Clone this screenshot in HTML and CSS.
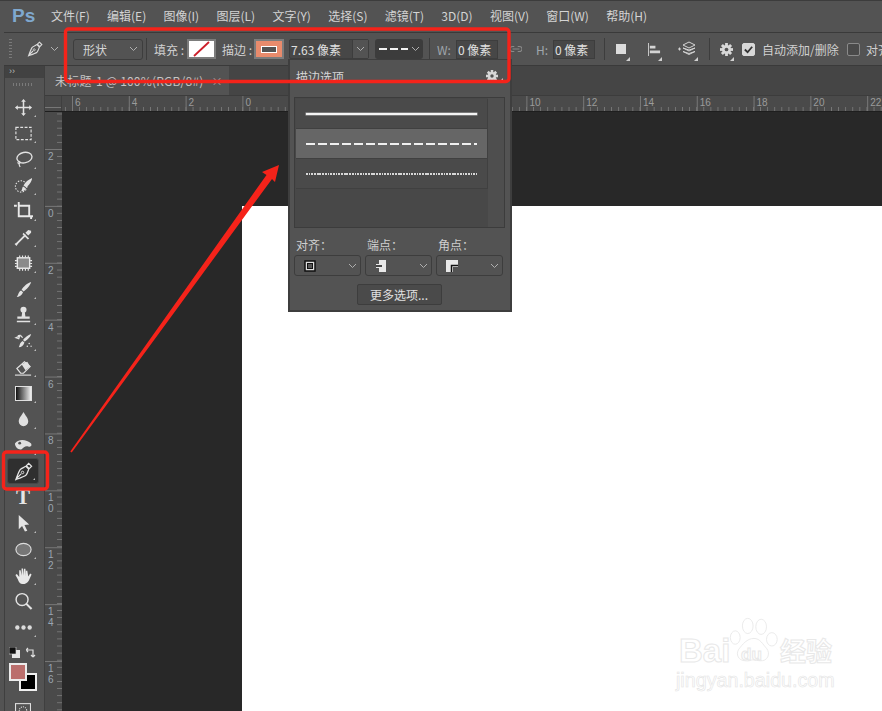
FILE: index.html
```html
<!DOCTYPE html>
<html lang="zh">
<head>
<meta charset="utf-8">
<title>Photoshop</title>
<link rel="stylesheet" href="styles.css">
</head>
<body>
<div class="app">
  <header class="menubar">
    <span class="logo">Ps</span>
    <nav class="menu">
      <span>文件(F)</span><span>编辑(E)</span><span>图像(I)</span><span>图层(L)</span><span>文字(Y)</span><span>选择(S)</span><span>滤镜(T)</span><span>3D(D)</span><span>视图(V)</span><span>窗口(W)</span><span>帮助(H)</span>
    </nav>
  </header>
  <section class="options">
    <span class="grip"></span>
    <svg class="pen-opt" viewBox="0 0 20 20"><path d="M15.500 1.500l3 3-2.500 2.500-3-3zM12.500 4.500l3 3c-1 3-1.500 5-3 6.500-2 1.500-5 2.500-10.500 4.500 2-5.500 3-8.500 4.500-10.500 1.500-1.500 3.500-2 6-3.500zM2 18l5.500-5.500" fill="none" stroke="#dcdcdc" stroke-width="1.400"/><circle cx="9" cy="11" r="1.300" fill="none" stroke="#dcdcdc"/></svg>
    <svg class="chev c1" viewBox="0 0 9 6"><path d="M1 1l3.500 3.500L8 1" fill="none" stroke="#b0b0b0"/></svg>
    <span class="vsep s1"></span>
    <div class="select shape-sel"><span>形状</span><svg class="chev" viewBox="0 0 9 6"><path d="M1 1l3.500 3.500L8 1" fill="none" stroke="#b0b0b0"/></svg></div>
    <span class="vsep s2"></span>
    <span class="lbl fill-lbl">填充 :</span>
    <span class="swatch"><svg viewBox="0 0 25 16"><rect width="25" height="16" fill="#fff"/><path d="M5 15L20 1" stroke="#cc1f2a" stroke-width="1.800"/></svg></span>
    <span class="lbl stroke-lbl">描边 :</span>
    <span class="swatch stroke-sw"><span class="stroke-in"></span></span>
    <div class="value-sel"><span class="val">7.63 像素</span><span class="arrow"><svg class="chev" viewBox="0 0 9 6"><path d="M1 1l3.500 3.500L8 1" fill="none" stroke="#b0b0b0"/></svg></span></div>
    <div class="dash-sel"><span class="dash"></span><svg class="chev" viewBox="0 0 9 6"><path d="M1 1l3.500 3.500L8 1" fill="none" stroke="#b0b0b0"/></svg></div>
    <span class="vsep s3"></span>
    <span class="lbl wh w-lbl">W:</span>
    <span class="field">0 像素</span>
    <svg class="link" viewBox="0 0 14 8"><path d="M5 1H3a3 3 0 0 0 0 6h2M9 1h2a3 3 0 0 1 0 6H9M3 4h8" fill="none" stroke="#8a8a8a" stroke-width="1.200"/></svg>
    <span class="lbl wh h-lbl">H:</span>
    <span class="field">0 像素</span>
    <span class="vsep s4"></span>
    <span class="tool-btn b1 corner"><span class="square"></span></span>
    <span class="tool-btn b2 corner"><svg viewBox="0 0 14 14"><path d="M0.500 0v14" stroke="#d4d4d4"/><path d="M2 3h6v3H2zM2 8h11v3H2z" fill="#d4d4d4"/></svg></span>
    <span class="tool-btn b3 corner"><svg viewBox="0 0 18 16"><path d="M0 8h3M1.500 6.500v3" stroke="#d4d4d4"/><path d="M11 1l6 3-6 3-6-3zM5 7l6 3 6-3-6 2zM5 10.500l6 3 6-3-6 2z" fill="none" stroke="#d4d4d4"/></svg></span>
    <span class="vsep s5"></span>
    <span class="tool-btn b4 corner"><svg viewBox="0 0 14 14"><g fill="#d8d8d8"><circle cx="7" cy="7" r="4.800"/><rect x="5.500" y="0" width="3" height="14"/><rect x="0" y="5.500" width="14" height="3"/><rect x="5.500" y="0" width="3" height="14" transform="rotate(45 7 7)"/><rect x="5.500" y="0" width="3" height="14" transform="rotate(-45 7 7)"/></g><circle cx="7" cy="7" r="2" fill="#535353"/></svg></span>
    <span class="check on"><svg viewBox="0 0 12 12"><path d="M2 6l3 3 5-6" fill="none" stroke="#333" stroke-width="2"/></svg></span>
    <span class="lbl auto">自动添加/删除</span>
    <span class="check off"></span>
    <span class="lbl align-lbl">对齐边缘</span>
  </section>
  <div class="main">
    <aside class="toolbox">
      <div class="collapse"><span>››</span></div>
      <span class="tgrip"></span>
      <div class="tools">
        <span class="tool corner"><svg viewBox="0 0 20 20"><path d="M10 1l2.500 3h-1.700v5.200H16V7.500l3 2.500-3 2.500v-1.700h-5.200V16h1.700L10 19l-2.500-3h1.700v-5.200H4v1.700L1 10l3-2.500v1.700h5.200V4H7.500z" fill="#e2e2e2"/></svg></span>
        <span class="tool corner"><svg viewBox="0 0 20 20"><rect x="2" y="3.500" width="16" height="13" fill="none" stroke="#e2e2e2" stroke-width="1.200" stroke-dasharray="3 1.600"/></svg></span>
        <span class="tool corner"><svg viewBox="0 0 20 20"><ellipse cx="11" cy="8" rx="8" ry="5.500" fill="none" stroke="#e2e2e2" stroke-width="1.400" transform="rotate(-12 11 8)"/><path d="M5 12c-2 2 0 3 1 2s0-2-1-2zM5.500 15c0 1.500.5 2 1 3" fill="none" stroke="#e2e2e2" stroke-width="1.200"/></svg></span>
        <span class="tool corner"><svg viewBox="0 0 20 20"><circle cx="7.500" cy="11" r="6" fill="none" stroke="#e2e2e2" stroke-width="1.200" stroke-dasharray="1.500 1.500"/><path d="M19 2c0 4-4 8-6 10l-3-2c2-4 5-6 9-8zM9.500 11l3 2c-1 3-3 3-5 3 1-1 1-4 2-5z" fill="#e2e2e2"/></svg></span>
        <span class="tool corner"><svg viewBox="0 0 20 20"><path d="M0 4h3M5 0v15h15M5 4h11v11M18 15v3" fill="none" stroke="#e8e8e8" stroke-width="2"/></svg></span>
        <span class="tool corner"><svg viewBox="0 0 20 20"><path d="M12 8l-8 8-1.500 2-1-1 2-1.500 8-8z" fill="none" stroke="#e2e2e2" stroke-width="1.200"/><path d="M10 5l6 6-1.500 1L9 6.500zM12 5l3-3 3 1 0 2-3 3z" fill="#e2e2e2"/></svg></span>
        <span class="tool corner"><svg viewBox="0 0 20 20"><rect x="3.500" y="4" width="13" height="11" fill="#8a8a8a" stroke="#e8e8e8" stroke-width="1.500"/><path d="M6 1.500v2M9 1.500v2M12 1.500v2M15 1.500v2M6 15.500v2M9 15.500v2M12 15.500v2M15 15.500v2M1 7h2M1 10h2M1 13h2M17 7h2M17 10h2M17 13h2" stroke="#e8e8e8" stroke-width="1.200"/></svg></span>
        <span class="tool corner"><svg viewBox="0 0 20 20"><path d="M18 2c-1 4-5 8-8 10l-2-2c2-3 6-7 10-8zM7.500 11l2 2c-1 3-4 5-7 5 2-1 2-6 5-7z" fill="#e2e2e2"/></svg></span>
        <span class="tool corner"><svg viewBox="0 0 20 20"><circle cx="10" cy="4" r="3.200" fill="#e2e2e2"/><path d="M8.700 6h2.600l.7 5h4.500v2.500H3.500V11H8zM3 15.500h14V17H3z" fill="#e2e2e2"/></svg></span>
        <span class="tool corner"><svg viewBox="0 0 20 20"><path d="M18 2c-1 4-5 7-7 8l-1.500-1.500C11 6 15 3 18 2zM9 9.500L11 11c-1 3-3 5-6 5 1-1 1-5 4-6.500z" fill="#e2e2e2"/><path d="M2 6l4-2-1 3zM4 4c2-1 4 0 5 2" fill="none" stroke="#e2e2e2" stroke-width="1.300"/><circle cx="16" cy="12" r=".8" fill="#e2e2e2"/><circle cx="14" cy="15" r=".8" fill="#e2e2e2"/><circle cx="18" cy="15" r=".7" fill="#e2e2e2"/></svg></span>
        <span class="tool corner"><svg viewBox="0 0 20 20"><path d="M3 11l8-7 6 5-7 7H7z" fill="none" stroke="#e2e2e2" stroke-width="1.200"/><path d="M8 6.500l6-2.500 3 5-5 4z" fill="#e2e2e2"/><path d="M1 18h17" stroke="#e2e2e2" stroke-width="1.200"/></svg></span>
        <span class="tool corner"><span class="gradient"></span></span>
        <span class="tool corner"><svg viewBox="0 0 20 20"><path d="M10 2c2 4 5 6 5 10a5 5 0 0 1-10 0c0-4 3-6 5-10z" fill="#e0e0e0"/></svg></span>
        <span class="tool corner"><svg viewBox="0 0 20 20"><path d="M1 8c3-5 12-5 17 0 1 2 0 4-3 3-3-1-5 1-7 3-3 1-7-2-7-6z" fill="#e0e0e0"/><circle cx="6" cy="7.500" r="1.500" fill="#535353"/></svg></span>
        <span class="tool current corner"><svg viewBox="0 0 20 20"><path d="M15.500 1.500l3 3-2.500 2.500-3-3zM12.500 4.500l3 3c-1 3-1.500 5-3 6.500-2 1.500-5 2.500-10.500 4.500 2-5.500 3-8.500 4.500-10.500 1.500-1.500 3.500-2 6-3.500zM2 18l5.500-5.500" fill="none" stroke="#e6e6e6" stroke-width="1.300"/><circle cx="9" cy="11" r="1.300" fill="none" stroke="#e6e6e6"/></svg></span>
        <span class="tool"><span class="type">T</span></span>
        <span class="tool corner"><svg viewBox="0 0 20 20"><path d="M5 1l11 10-5 .5 3 6-2.500 1-3-6L5 16z" fill="#e4e4e4"/></svg></span>
        <span class="tool corner"><svg viewBox="0 0 20 20"><ellipse cx="10" cy="10" rx="8" ry="6.500" fill="#767676" stroke="#dcdcdc" stroke-width="1.200"/></svg></span>
        <span class="tool corner"><svg viewBox="0 0 20 20"><path d="M4 14L1.500 9.500l1.500-1 2.500 3V4.500h1.500L8 10V2.500h1.500L10.500 10V3h1.500l.5 7.500V5h1.500L15 11l2-3 1.500 1-3 6.500C14 18 12 19 9 19c-2.500 0-4-2-5-5z" fill="#e8e8e8"/></svg></span>
        <span class="tool"><svg viewBox="0 0 20 20"><circle cx="8.500" cy="8" r="6.300" fill="none" stroke="#e4e4e4" stroke-width="1.500"/><path d="M13 12.500l5.500 5.500" stroke="#e4e4e4" stroke-width="2.200"/></svg></span>
        <span class="tool corner"><svg viewBox="0 0 20 20"><circle cx="3.500" cy="10" r="2.300" fill="#dcdcdc"/><circle cx="10" cy="10" r="2.300" fill="#dcdcdc"/><circle cx="16.500" cy="10" r="2.300" fill="#dcdcdc"/></svg></span>
      </div>
      <div class="mini-row">
        <svg viewBox="0 0 11 11"><rect x="3" y="3" width="8" height="8" fill="#e6e6e6"/><rect x="0" y="0" width="7" height="7" fill="#111" stroke="#ddd" stroke-width=".6"/></svg>
        <svg viewBox="0 0 11 11"><path d="M1 3h6v7M0 3l2-2M0 3l2 2M7 10L5 8M7 10l2-2" fill="none" stroke="#e0e0e0" stroke-width="1.200"/></svg>
      </div>
      <div class="colors"><span class="bg-color"></span><span class="fg-color"></span></div>
      <div class="quick"><svg viewBox="0 0 15 12"><rect x=".5" y=".5" width="14" height="11" fill="none" stroke="#e0e0e0"/><circle cx="7.500" cy="7" r="3.500" fill="none" stroke="#e0e0e0" stroke-dasharray="1 1"/></svg></div>
    </aside>
    <div class="work">
      <div class="tabs"><div class="tab"><span>未标题-1 @ 100%(RGB/8#)</span><span class="x">×</span></div></div>
      <div class="ruler-top">
        <span class="corner-box"></span>
        <div class="hticks"><span>6</span><span>4</span><span>2</span><span>0</span><span class="gap5"></span><span>10</span><span>12</span><span>14</span><span>16</span><span>18</span><span>20</span><span>22</span></div>
      </div>
      <div class="stage">
        <div class="ruler-left">
          <span>2</span><span>0</span><span>2</span><span>4</span><span>6</span><span>8</span><span>1<br>0</span><span>1<br>2</span><span>1<br>4</span><span>1<br>6</span>
        </div>
        <div class="canvas"><div class="doc"></div></div>
      </div>
    </div>
  </div>
</div>

<div class="panel">
  <div class="panel-head"><span>描边选项</span><span class="gear-wrap corner"><svg class="gear" viewBox="0 0 14 14"><g fill="#d8d8d8"><circle cx="7" cy="7" r="4.800"/><rect x="5.500" y="0" width="3" height="14"/><rect x="0" y="5.500" width="14" height="3"/><rect x="5.500" y="0" width="3" height="14" transform="rotate(45 7 7)"/><rect x="5.500" y="0" width="3" height="14" transform="rotate(-45 7 7)"/></g><circle cx="7" cy="7" r="2" fill="#535353"/></svg></span></div>
  <div class="list">
    <div class="list-main">
      <div class="row"><span class="line solid"></span></div>
      <div class="row active"><span class="line dashed"></span></div>
      <div class="row"><span class="line dotted"></span></div>
    </div>
    <div class="list-scroll"></div>
  </div>
  <div class="pickers">
    <div class="picker"><label>对齐：</label><div class="pick"><svg viewBox="0 0 14 14"><rect x="2" y="2" width="10" height="10" fill="#ddd" stroke="#111" stroke-width="1.500"/><rect x="4.500" y="4.500" width="5" height="5" fill="#555" stroke="#111"/></svg><svg class="chev" viewBox="0 0 9 6"><path d="M1 1l3.500 3.500L8 1" fill="none" stroke="#b0b0b0"/></svg></div></div>
    <div class="picker"><label>端点：</label><div class="pick"><svg viewBox="0 0 14 14"><path d="M5 1h7v12H5V9H2V5h3z" fill="#e8e8e8"/><path d="M2 7h6" stroke="#111" stroke-width="1.500"/></svg><svg class="chev" viewBox="0 0 9 6"><path d="M1 1l3.500 3.500L8 1" fill="none" stroke="#b0b0b0"/></svg></div></div>
    <div class="picker"><label>角点：</label><div class="pick"><svg viewBox="0 0 14 14"><path d="M1 1h12v7H8v5H1z" fill="#e8e8e8"/><path d="M13 6.500H6.500V13" fill="none" stroke="#111" stroke-width="1.500"/></svg><svg class="chev" viewBox="0 0 9 6"><path d="M1 1l3.500 3.500L8 1" fill="none" stroke="#b0b0b0"/></svg></div></div>
  </div>
  <div class="more-wrap"><button class="more">更多选项...</button></div>
</div>

<svg class="marks" viewBox="0 0 882 711">
  <rect x="65.500" y="29" width="443.500" height="52.500" rx="3" fill="none" stroke="#f5231a" stroke-width="3.400"/>
  <rect x="3.500" y="452" width="44" height="37" rx="3" fill="none" stroke="#f5231a" stroke-width="3.400"/>
  <path d="M70.300 451.500L266.500 175L262 172L279 165L275 182L272 179L71.700 452.500Z" fill="#f5231a"/>
</svg>

<div class="watermark">
  <svg viewBox="0 0 60 56"><g fill="#fff" stroke="#e8e8e8" stroke-width="1"><ellipse cx="9" cy="23" rx="5.500" ry="7.500"/><ellipse cx="23" cy="10" rx="6" ry="8.500"/><ellipse cx="38" cy="11" rx="6" ry="8.500"/><ellipse cx="50" cy="25" rx="6" ry="7.500"/><path d="M30 24c7 0 10 7 14 11 5 6 1 15-7 14-4 0-5-1-8-1s-5 2-9 1c-7 0-11-7-7-13 4-5 9-12 17-12z"/></g></svg>
  <span class="wm-bai">Bai</span><span class="wm-du">du</span><span class="wm-jy">经验</span>
  <span class="wm-url">jingyan.baidu.com</span>
</div>
</body>
</html>
```
FILE: styles.css
```css
* { box-sizing: border-box; }
html, body { margin: 0; padding: 0; }
body {
  width: 882px; height: 711px; overflow: hidden; position: relative;
  background: #535353; color: #d6d6d6;
  font: 12px "Noto Sans CJK SC", "Liberation Sans", sans-serif;
}
.app { display: flex; flex-direction: column; height: 711px; }
.menubar { height: 32px; display: flex; align-items: center; padding: 0 0 2px 12px; border-top: 1px solid #3c3c3c; }
.logo { width: 39px; font: bold 19px "Liberation Sans", sans-serif; color: #7fa8cf; }
.menu { display: flex; gap: 17.300px; color: #d4d4d4; white-space: nowrap; }
.options {
  height: 34px; display: flex; align-items: center; position: relative;
  border-top: 1px solid #3a3a3a; border-bottom: 1px solid #3a3a3a; margin-left: 4px; padding-left: 5px; white-space: nowrap;
}
.grip { width: 3px; height: 20px; margin-right: 15px; background: repeating-linear-gradient(#7a7a7a 0 1px, transparent 1px 3px); flex: none; }
.pen-opt { width: 16px; height: 16px; margin-right: 7px; flex: none; }
.chev { width: 9px; height: 6px; flex: none; }
.vsep { width: 1px; height: 22px; background: #3d3d3d; flex: none; }
.s1 { margin: 0 6px 0 7px; }
.s2 { margin: 0 7px 0 3px; }
.s3 { margin: 0 7px 0 6px; }
.s4 { margin: 0 11px 0 9px; }
.s5 { margin: 0 10px 0 11px; }
.select { width: 70px; height: 21px; border: 1px solid #3d3d3d; border-radius: 3px; display: flex; align-items: center; justify-content: space-between; padding: 0 4px 0 9px; flex: none; }
.lbl { color: #d0d0d0; flex: none; }
.fill-lbl { width: 33px; }
.stroke-lbl { width: 32px; margin-left: 6px; }
.swatch { width: 29px; height: 20px; border: 2px solid #7c7c7c; display: block; flex: none; }
.swatch svg { display: block; width: 25px; height: 16px; }
.stroke-sw { width: 30px; background: #e98b6c; display: flex; align-items: center; justify-content: center; margin-right: 5px; }
.stroke-in { width: 16px; height: 7px; background: #535353; border: 1.500px solid #fff; }
.value-sel { width: 80px; height: 20px; display: flex; border: 1px solid #3d3d3d; border-radius: 2px; background: #474747; flex: none; }
.val { flex: 1; padding-left: 1px; line-height: 19px; color: #e0e0e0; }
.arrow { width: 16px; border-left: 1px solid #3d3d3d; display: flex; align-items: center; justify-content: center; background: #535353; }
.dash-sel { width: 48px; height: 20px; margin-left: 6px; background: #3c3c3c; border-radius: 3px; display: flex; align-items: center; gap: 3px; padding-left: 4px; flex: none; }
.dash { width: 29px; height: 2px; background: repeating-linear-gradient(90deg, #f2f2f2 0 8px, transparent 8px 11px); }
.wh { color: #a0a6ac; }
.w-lbl { width: 19px; }
.h-lbl { width: 17px; }
.field { width: 42px; height: 19px; border: 1px solid #3d3d3d; background: #474747; padding-left: 1px; line-height: 17px; color: #e0e0e0; flex: none; }
.link { width: 12px; height: 8px; margin: 0 14px 0 12px; flex: none; }
.tool-btn { display: flex; align-items: center; justify-content: center; flex: none; height: 24px; position: relative; }
.corner::after { content: ""; position: absolute; right: 0; bottom: 0; border: 2px solid transparent; border-right-color: #d0d0d0; border-bottom-color: #d0d0d0; }
.tool-btn svg { width: 13px; height: 13px; }
.b1 { width: 14px; justify-content: flex-start; }
.square { width: 10px; height: 10px; background: #dcdcdc; }
.b2 { width: 14px; margin-left: 18px; justify-content: flex-start; }
.b3 { width: 20px; margin-left: 16px; justify-content: flex-start; }
.b3 svg { width: 18px; height: 16px; }
.b4 { width: 14px; justify-content: flex-start; }
.check { width: 13px; height: 13px; border: 1px solid #8a8a8a; border-radius: 2px; flex: none; background: #4a4a4a; }
.check.on { background: #d8d8d8; border-color: #d8d8d8; margin-left: 8px; }
.check.off { margin-left: 9px; }
.check svg { display: block; width: 11px; height: 11px; }
.auto { margin-left: 7px; width: 76px; }
.align-lbl { margin-left: 6px; }
.main { flex: 1; display: flex; min-height: 0; padding-left: 4px; }
.toolbox { width: 41px; border-left: 1px solid #3f3f3f; border-right: 1px solid #3f3f3f; padding-right: 3px; display: flex; flex-direction: column; align-items: center; overflow: hidden; flex: none; }
.collapse { align-self: stretch; margin-right: -3px; height: 12px; flex: none; background: #424242; color: #bbb; font: 9px/11px "Liberation Sans", sans-serif; padding-left: 4px; }
.tgrip { width: 20px; height: 3px; margin-top: 5px; flex: none; background: repeating-linear-gradient(90deg, #7a7a7a 0 1px, transparent 1px 3px); }
.tools { display: flex; flex-direction: column; margin-top: 8px; flex: none; }
.tool { width: 32px; height: 26px; display: flex; align-items: center; justify-content: center; position: relative; flex: none; }
.tool.corner::after { right: 3px; bottom: 3px; border-width: 1.500px; border-right-color: #bdbdbd; border-bottom-color: #bdbdbd; }
.tool svg { width: 19px; height: 19px; }
.tool.current { background: #2f2f2f; border: 1px solid #474747; border-radius: 3px; }
.gradient { width: 17px; height: 15px; border: 1px solid #e0e0e0; background: linear-gradient(90deg, #111, #f0f0f0); }
.type { font: bold 21px/1 "Liberation Serif", serif; color: #e6e6e6; }
.mini-row { display: flex; justify-content: space-between; width: 28px; margin-top: 4px; height: 16px; align-items: center; flex: none; }
.mini-row svg { width: 11px; height: 11px; }
.colors { width: 28px; height: 28px; position: relative; margin-top: 3px; flex: none; }
.bg-color { position: absolute; left: 10px; top: 10px; width: 18px; height: 18px; background: #000; border: 2px solid #f0f0f0; }
.fg-color { position: absolute; left: 0; top: 0; width: 18px; height: 18px; background: #bb6f6d; border: 2px solid #ececec; }
.quick { margin-top: 12px; height: 12px; flex: none; }
.quick svg { display: block; width: 16px; height: 13px; }
.work { flex: 1; display: flex; flex-direction: column; min-width: 0; }
.tabs { height: 30px; display: flex; border-bottom: 1px solid #3c3c3c; background: #454545; flex: none; }
.tab { width: 184px; background: #535353; display: flex; align-items: center; padding-left: 10px; gap: 8px; color: #c6c6c6; white-space: nowrap; letter-spacing: .2px; }
.x { color: #aaa; font-size: 11px; }
.ruler-top { height: 16px; display: flex; background: #4a4a4a; border-bottom: 1px solid #1e1e1e; flex: none; }
.corner-box { width: 17px; flex: none; border-right: 1px solid #3f3f3f; background-image: linear-gradient(#777 1px, transparent 1px); background-size: 100% 1px; background-position: 0 11px; background-repeat: no-repeat; }
.hticks {
  flex: 1; display: flex; color: #9b9b9b; font: 10px/14px "Liberation Sans", sans-serif; padding-left: 10px;
  background-image: linear-gradient(90deg, #777 1px, transparent 1px), linear-gradient(90deg, #777 1px, transparent 1px);
  background-size: 56.800px 100%, 7.100px 4px; background-position: 10px 0, 10px bottom; background-repeat: repeat-x;
}
.hticks span { width: 56.800px; padding-left: 3px; flex: none; }
.hticks .gap5 { width: 227.200px; }
.stage { flex: 1; display: flex; min-height: 0; }
.ruler-left {
  width: 17px; flex: none; background: #4a4a4a; display: flex; flex-direction: column; padding-top: 37px; color: #9aa5b0;
  font: 10px/11px "Liberation Sans", sans-serif; overflow: hidden;
  background-image: linear-gradient(#777 1px, transparent 1px), linear-gradient(#777 1px, transparent 1px);
  background-size: 100% 56.900px, 5px 7.100px; background-position: 0 37px, right 37px; background-repeat: repeat-y;
}
.ruler-left span { height: 56.900px; padding: 2px 0 0 3px; flex: none; }
.canvas { flex: 1; background: #282828; padding: 94px 0 0 180px; overflow: hidden; }
.doc { background: #fff; height: 100%; }
.panel { position: absolute; left: 288px; top: 59px; width: 224px; height: 253px; background: #535353; border: 2px solid #3e3e3e; border-top-width: 1px; padding: 0 5px 0 4px; }
.panel-head { height: 37px; display: flex; justify-content: space-between; align-items: center; padding: 0 2px 5px 2px; color: #d6d6d6; }
.gear-wrap { position: relative; width: 17px; height: 12px; display: block; }
.gear { display: block; width: 12px; height: 12px; }
.list { height: 131px; display: flex; border: 1px solid #3c3c3c; padding: 1px 0 0 1px; background: #484848; }
.list-main { width: 192px; flex: none; }
.list-scroll { flex: 1; background: #4e4e4e; margin-top: -1px; }
.row { height: 30px; display: flex; align-items: center; padding: 0 10px; border-bottom: 1px solid #404040; border-right: 1px solid #404040; background: #4a4a4a; }
.row.active { background: #666; }
.line { display: block; width: 171px; }
.solid { height: 2px; background: #f4f4f4; box-shadow: 0 0 0 .5px #a8a8a8; }
.dashed { height: 2px; background: repeating-linear-gradient(90deg, #f0f0f0 0 8.700px, transparent 8.700px 12px); }
.dotted { height: 2px; background: repeating-linear-gradient(90deg, #d8d8d8 0 1.700px, transparent 1.700px 2.700px); }
.pickers { display: flex; gap: 4px; margin-top: 8px; }
.picker { width: 67px; flex: none; }
.picker label { display: block; height: 18px; line-height: 18px; color: #cfcfcf; padding-left: 2px; }
.pick { height: 21px; margin-top: 1px; border: 1px solid #3d3d3d; border-radius: 3px; display: flex; align-items: center; justify-content: space-between; padding: 0 3px 0 8px; }
.pick svg:first-child { width: 14px; height: 14px; }
.more-wrap { display: flex; justify-content: center; margin-top: 8px; padding-right: 1px; }
.more { width: 85px; height: 21px; padding: 0; background: #4a4a4a; border: 1px solid #3d3d3d; border-radius: 2px; color: #e0e0e0; font: 12px "Noto Sans CJK SC", sans-serif; }
.marks { position: absolute; left: 0; top: 0; width: 882px; height: 711px; pointer-events: none; }
.watermark { position: absolute; left: 676px; top: 617px; width: 165px; height: 85px; color: #fff; }
.watermark svg { position: absolute; left: 51px; top: 0; width: 54px; height: 50px; }
.watermark span { position: absolute; -webkit-text-stroke: 1px #e8e8e8; font-family: "Liberation Sans", sans-serif; font-weight: bold; }
.wm-bai { left: 3px; top: 15px; font-size: 33px; }
.wm-du { left: 65px; top: 28px; font-size: 17px; }
.watermark .wm-jy { left: 104px; top: 14px; font-size: 26px; font-family: "Noto Sans CJK SC", sans-serif; }
.watermark .wm-url { left: 0; top: 52px; font-size: 19.700px; font-weight: normal; -webkit-text-stroke: .6px #e4e4e4; }
```
